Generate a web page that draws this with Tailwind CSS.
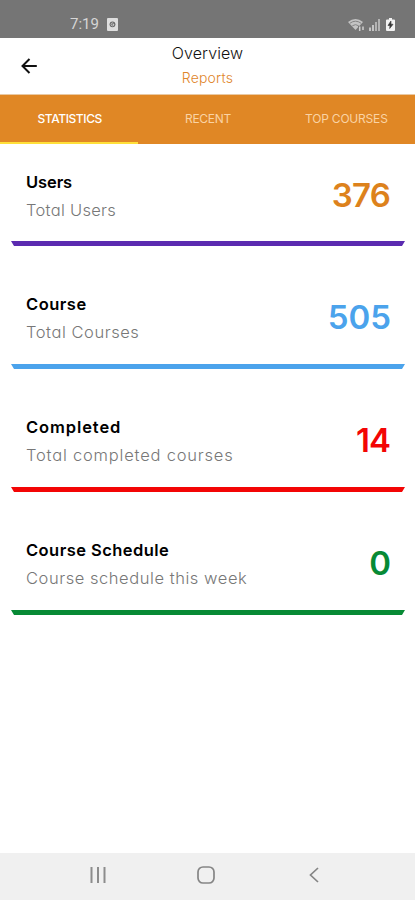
<!DOCTYPE html>
<html lang="en">
    <head>
        <meta charset="UTF-8" />
        <meta name="viewport" content="width=device-width, initial-scale=1.0" />
        <title>Overview Reports</title>
        <script src="https://cdn.jsdelivr.net/npm/@tailwindcss/browser@4"></script>
    </head>
    <body class="bg-white font-['Inter','Liberation_Sans',sans-serif] [font-feature-settings:'cv11'] text-black">
        <div class="flex flex-col h-[900px] w-[415px] overflow-hidden">
            <!-- Status bar -->
            <div class="h-[38px] shrink-0 bg-[#757575] text-[#d6d6d6] flex items-center pl-[70px] pr-[20px] pt-[11px]">
                <span class="font-['Roboto',sans-serif] text-[15px] leading-none">7:19</span>
                <svg class="ml-2 w-[11px] h-[13px]" viewBox="0 0 11 13">
                    <rect width="11" height="13" rx="1" fill="#dedede" />
                    <circle cx="5.5" cy="6.3" r="2.9" fill="#666" />
                    <path d="M4 6.3a1.5 1.5 0 0 1 2.5-1M4 6.3a1.5 1.5 0 0 0 3 .2H5.6" fill="none" stroke="#ddd" stroke-width=".8" />
                </svg>
                <svg class="ml-auto w-[17px] h-[14px]" viewBox="0 0 17 14">
                    <path d="M0 4Q7.5-2 15 4L7.5 12Z" fill="#c4c4c4" />
                    <path d="M2 5.2Q7.5 1.2 13 5.2M4.3 7.8Q7.5 5.5 10.7 7.8" fill="none" stroke="#858585" stroke-width="1" />
                    <path d="M10 8h7v6h-7z" fill="#757575" />
                    <path d="M11.7 8.5v4.5M15 8.5V12" stroke="#cfcfcf" stroke-width="1.5" />
                </svg>
                <svg class="ml-1 w-[11px] h-[13px]" viewBox="0 0 11 13">
                    <path d="M1 9.5V13M4 7v6" stroke="#c4c4c4" stroke-width="2" />
                    <path d="M7 4v9M10 1v12" stroke="#b3b3b3" stroke-width="2" />
                </svg>
                <svg class="ml-[6px] w-[9px] h-[13px]" viewBox="0 0 9 13">
                    <path d="M3 0h3v1.5h2q1 0 1 1V12q0 1-1 1H1q-1 0-1-1V2.500q0-1 1-1h2z" fill="#f2f2f2" />
                    <path d="M4.900 3L2 7.500h2L3.700 10.500 7 6.300H5z" fill="#333" stroke="#444" stroke-width=".7" />
                </svg>
            </div>

            <!-- Title bar -->
            <header class="h-[57px] shrink-0 grid grid-cols-[60px_1fr_60px] items-center border-b border-[#e9c9a3]">
                <svg class="ml-[21px] w-4 h-4" viewBox="0 0 16 16" fill="none" stroke="#111" stroke-width="2">
                    <path d="M15.800 8H1.500M8.500 1L1.500 8l7 7" />
                </svg>
                <div class="text-center pb-[2px]">
                    <h1 class="text-[16px] leading-[26px] font-light tracking-[0.1px] text-[#111]">Overview</h1>
                    <p class="text-[14px] leading-[24px] font-light tracking-[0.2px] text-[#df862b]">Reports</p>
                </div>
            </header>

            <!-- Tabs -->
            <nav class="h-[49px] shrink-0 grid grid-cols-3 bg-[#e08725] text-[12px] text-center leading-[47px]">
                <div class="pl-px text-white font-medium tracking-[-0.4px] border-b-2 border-[#ffe03a]">STATISTICS</div>
                <div class="pl-px text-[#fad3a4] tracking-[-0.3px]">RECENT</div>
                <div class="pl-px text-[#fad3a4] tracking-[-0.2px]">TOP COURSES</div>
            </nav>

            <!-- Statistics -->
            <main class="flex-1 pl-[11px] pr-[10px]">
                <section class="h-[102px] flex flex-col">
                    <div class="flex-1 flex items-end justify-between px-[15px] pb-[17px]">
                        <div>
                            <h2 class="text-[16.5px] leading-[28px] font-semibold tracking-[-0.1px]">Users</h2>
                            <p class="text-[16.5px] leading-[28px] font-light tracking-[0.3px] text-[#777]">Total Users</p>
                        </div>
                        <div class="text-[33px] leading-[58px] font-semibold tracking-[-0.8px] text-[#dd821c]">376</div>
                    </div>
                    <div class="h-[5px] bg-[#5b2bb0] rounded-b-[3px] [clip-path:polygon(0_0,100%_0,calc(100%-3px)_100%,3px_100%)]"></div>
                </section>
                <section class="h-[123px] flex flex-col">
                    <div class="flex-1 flex items-end justify-between px-[15px] pb-[18px]">
                        <div>
                            <h2 class="text-[16.5px] leading-[28px] font-semibold tracking-[0.5px]">Course</h2>
                            <p class="text-[16.5px] leading-[28px] font-light tracking-[0.55px] text-[#777]">Total Courses</p>
                        </div>
                        <div class="text-[33px] leading-[58px] font-semibold -mr-px text-[#4ba3ec]">505</div>
                    </div>
                    <div class="h-[5px] bg-[#4ba3ec] rounded-b-[3px] [clip-path:polygon(0_0,100%_0,calc(100%-3px)_100%,3px_100%)]"></div>
                </section>
                <section class="h-[123px] flex flex-col">
                    <div class="flex-1 flex items-end justify-between px-[15px] pb-[18px]">
                        <div>
                            <h2 class="text-[16.5px] leading-[28px] font-semibold tracking-[0.9px]">Completed</h2>
                            <p class="text-[16.5px] leading-[28px] font-light tracking-[0.8px] text-[#777]">Total completed courses</p>
                        </div>
                        <div class="text-[33px] leading-[58px] font-semibold tracking-[-1px] text-[#f30505]">14</div>
                    </div>
                    <div class="h-[5px] bg-[#f30505] rounded-b-[3px] [clip-path:polygon(0_0,100%_0,calc(100%-3px)_100%,3px_100%)]"></div>
                </section>
                <section class="h-[123px] flex flex-col">
                    <div class="flex-1 flex items-end justify-between px-[15px] pb-[18px]">
                        <div>
                            <h2 class="text-[16.5px] leading-[28px] font-semibold tracking-[0.45px]">Course Schedule</h2>
                            <p class="text-[16.5px] leading-[28px] font-light tracking-[0.55px] text-[#777]">Course schedule this week</p>
                        </div>
                        <div class="text-[33px] leading-[58px] font-semibold -mr-px text-[#078a35]">0</div>
                    </div>
                    <div class="h-[5px] bg-[#078a35] rounded-b-[3px] [clip-path:polygon(0_0,100%_0,calc(100%-3px)_100%,3px_100%)]"></div>
                </section>
            </main>

            <!-- Android navigation -->
            <footer class="h-[47px] shrink-0 bg-[#f0f0f0] flex items-center justify-between pl-[90px] pr-[96px] pb-[3px]">
                <svg class="w-4 h-4" viewBox="0 0 16 16" stroke="#8c8c8c" stroke-width="2">
                    <path d="M1.500 0v16M8 0v16M14.500 0v16" />
                </svg>
                <svg class="w-[18px] h-[18px] mr-[3px]" viewBox="0 0 18 18" fill="none" stroke="#858585" stroke-width="1.700">
                    <rect x="1" y="1" width="16" height="16" rx="5" />
                </svg>
                <svg class="w-[10px] h-4" viewBox="0 0 10 16" fill="none" stroke="#858585" stroke-width="1.700">
                    <path d="M9 1L1.500 8 9 15" />
                </svg>
            </footer>
        </div>
    </body>
</html>
